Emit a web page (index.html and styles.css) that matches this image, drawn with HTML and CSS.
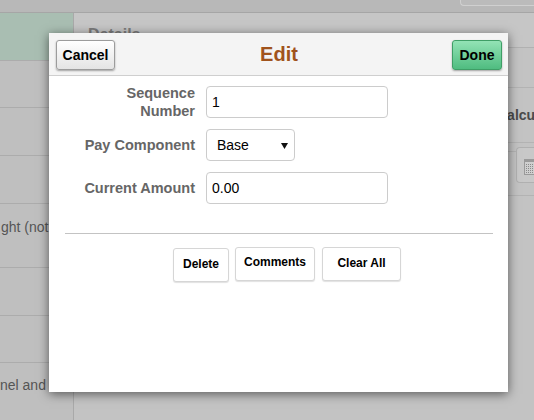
FILE: index.html
```html
<!DOCTYPE html>
<html lang="en">
<head>
<meta charset="utf-8">
<title>Edit</title>
<link rel="stylesheet" href="styles.css">
</head>
<body>
<div class="page">
  <div class="topbar"><div class="topbtn"></div></div>
  <div class="main">
    <div class="leftcol">
      <div class="lrow r48 sel"></div>
      <div class="lrow r47"></div>
      <div class="lrow r48"></div>
      <div class="lrow r48"></div>
      <div class="lrow r64"><span class="ltext t1">ght (not</span></div>
      <div class="lrow r48"></div>
      <div class="lrow r47"></div>
      <div class="lrow rest"><span class="ltext t2">nel and i</span></div>
    </div>
    <div class="content">
      <div class="dhead">Details</div>
      <div class="cblock b40"></div>
      <div class="cblock b55"><span class="calc">Calcu</span></div>
      <div class="cblock b9"></div>
      <div class="dateline">
        <div class="datebox">
          <svg class="cal" width="12" height="16" viewBox="0 0 12 16">
            <rect x="0.5" y="0.5" width="11" height="15" fill="#cfcfcf" stroke="#9a9a9a"/>
            <rect x="1" y="1" width="10" height="2" fill="#9a9a9a"/>
            <g fill="#8a8a8a">
              <rect x="2" y="5" width="1" height="1"/><rect x="4" y="5" width="1" height="1"/><rect x="6" y="5" width="1" height="1"/><rect x="8" y="5" width="1" height="1"/>
              <rect x="2" y="7" width="1" height="1"/><rect x="4" y="7" width="1" height="1"/><rect x="6" y="7" width="1" height="1"/><rect x="8" y="7" width="1" height="1"/>
              <rect x="2" y="9" width="1" height="1"/><rect x="4" y="9" width="1" height="1"/><rect x="6" y="9" width="1" height="1"/><rect x="8" y="9" width="1" height="1"/>
              <rect x="2" y="11" width="1" height="1"/><rect x="4" y="11" width="1" height="1"/><rect x="6" y="11" width="1" height="1"/><rect x="8" y="11" width="1" height="1"/>
              <rect x="2" y="13" width="1" height="1"/><rect x="4" y="13" width="1" height="1"/><rect x="6" y="13" width="1" height="1"/><rect x="8" y="13" width="1" height="1"/>
            </g>
          </svg>
        </div>
      </div>
    </div>
  </div>
</div>

<div class="modal">
  <div class="mhead">
    <div class="hl"><button class="hbtn cancel">Cancel</button></div>
    <h1 class="title">Edit</h1>
    <div class="hr-side"><button class="hbtn done">Done</button></div>
  </div>
  <div class="mbody">
    <div class="form">
      <label class="lbl two">Sequence<br>Number</label>
      <div class="field"><input class="inp" type="text" value="1"></div>
      <label class="lbl">Pay Component</label>
      <div class="field">
        <div class="select"><span>Base</span>
          <svg class="arrow" width="7" height="6" viewBox="0 0 7 6"><path d="M0 0 H7 L3.5 6 Z" fill="#111"/></svg>
        </div>
      </div>
      <label class="lbl">Current Amount</label>
      <div class="field"><input class="inp" type="text" value="0.00"></div>
    </div>
    <div class="sep"></div>
    <div class="actions">
      <button class="abtn del">Delete</button>
      <button class="abtn com">Comments</button>
      <button class="abtn clr">Clear All</button>
    </div>
  </div>
</div>
</body>
</html>
```

FILE: styles.css
```css
html, body {
  margin: 0;
  padding: 0;
}
body {
  width: 534px;
  height: 420px;
  overflow: hidden;
  position: relative;
  background: #c1c1c1;
  font-family: "Liberation Sans", Arial, sans-serif;
}

/* ---------- dimmed page behind the dialog ---------- */
.page {
  display: flex;
  flex-direction: column;
  height: 420px;
}
.topbar {
  height: 12px;
  flex: none;
  background: #b8b8b8;
  border-bottom: 1px solid #a6a6a6;
  display: flex;
  justify-content: flex-end;
}
.topbtn {
  width: 74px;
  height: 6px;
  box-sizing: border-box;
  border: 1px solid #d0d0d0;
  border-top: none;
  border-right: none;
  border-radius: 0 0 0 4px;
  background: #bbbbbb;
}
.main {
  flex: 1;
  display: flex;
}
.leftcol {
  width: 73px;
  flex: none;
  background: #bfbfbf;
  border-right: 1px solid #a9a9a9;
  display: flex;
  flex-direction: column;
  overflow: hidden;
}
.lrow {
  box-sizing: border-box;
  border-bottom: 1px solid #acacac;
  flex: none;
  white-space: nowrap;
}
.r47 { height: 47px; }
.r48 { height: 48px; }
.r64 { height: 64px; }
.rest { flex: 1; border-bottom: none; }
.sel { background: #a9beb2; }
.ltext {
  display: block;
  font-size: 14px;
  line-height: 16px;
  color: #555;
}
.t1 { padding: 15px 0 0 1px; }
.t2 { padding-top: 14px; }

.content {
  flex: 1;
  background: #c3c3c3;
  display: flex;
  flex-direction: column;
  overflow: hidden;
}
.dhead {
  height: 35px;
  box-sizing: border-box;
  padding: 13px 0 0 14px;
  font-size: 16px;
  font-weight: bold;
  color: #7c7c7c;
  border-bottom: 1px solid #b1b1b1;
  background: #c6c6c6;
}
.cblock {
  box-sizing: border-box;
  border-bottom: 1px solid #b3b3b3;
  white-space: nowrap;
  overflow: hidden;
}
.b40 { height: 40px; }
.b55 { height: 55px; }
.b9 { height: 9px; }
.calc {
  display: block;
  padding: 19px 0 0 423px;
  font-size: 14px;
  font-weight: bold;
  color: #4a4a4a;
}
.dateline {
  height: 43px;
  border-bottom: 1px solid #b3b3b3;
  display: flex;
  justify-content: flex-end;
  align-items: flex-start;
}
.datebox {
  width: 18px;
  height: 36px;
  margin-top: -5px;
  box-sizing: border-box;
  border: 1px solid #b0b0b0;
  border-right: none;
  border-radius: 4px 0 0 4px;
  background: #c8c8c8;
  padding: 11px 0 0 7px;
}
.cal { display: block; }

/* ---------- dialog ---------- */
.modal {
  position: absolute;
  left: 49px;
  top: 33px;
  width: 459px;
  height: 359px;
  background: #fff;
  box-shadow: 0 2px 10px rgba(0, 0, 0, 0.55);
  display: flex;
  flex-direction: column;
}
.mhead {
  height: 42px;
  flex: none;
  box-sizing: content-box;
  background: #f4f4f4;
  border-bottom: 1px solid #cfcfcf;
  display: grid;
  grid-template-columns: 1fr auto 1fr;
  align-items: center;
  padding: 0 6px 0 7px;
}
.hl { display: flex; justify-content: flex-start; }
.hr-side { display: flex; justify-content: flex-end; }
.title {
  margin: 0;
  font-size: 20px;
  font-weight: bold;
  color: #a0531c;
  line-height: 24px;
}
.hbtn {
  height: 30px;
  margin-top: 1px;
  font-family: "Liberation Sans", Arial, sans-serif;
  font-size: 14px;
  font-weight: bold;
  color: #000;
  border-radius: 3px;
  padding: 0;
  cursor: pointer;
}
.cancel {
  width: 59px;
  background: linear-gradient(#ffffff, #e4e4e4);
  border: 1px solid #9c9c9c;
  box-shadow: 0 1px 2px rgba(0, 0, 0, 0.35);
}
.done {
  width: 50px;
  background: linear-gradient(#93e3b5, #4fbc80);
  border: 1px solid #3f9e66;
  box-shadow: 0 1px 2px rgba(0, 0, 0, 0.35);
}

.mbody {
  flex: 1;
  display: flex;
  flex-direction: column;
}
.form {
  display: grid;
  grid-template-columns: 146px 182px;
  grid-template-rows: 32px 32px 32px;
  column-gap: 11px;
  row-gap: 11px;
  margin-top: 10px;
}
.lbl {
  justify-self: end;
  align-self: center;
  text-align: right;
  font-size: 14.5px;
  font-weight: bold;
  color: #666;
  line-height: 18px;
}
.field { height: 32px; }
.inp {
  width: 182px;
  height: 32px;
  box-sizing: border-box;
  border: 1px solid #cccccc;
  border-radius: 4px;
  padding: 0 5px;
  margin: 0;
  font-family: "Liberation Sans", Arial, sans-serif;
  font-size: 14px;
  color: #000;
  background: #fff;
}
.select {
  width: 89px;
  height: 32px;
  box-sizing: border-box;
  border: 1px solid #cccccc;
  border-radius: 4px;
  background: #fff;
  display: flex;
  align-items: center;
  justify-content: space-between;
  padding: 0 6px 0 10px;
  font-size: 14px;
  color: #000;
}
.arrow { display: block; margin-top: 1px; }

.sep {
  height: 1px;
  background: #c3c3c3;
  margin: 29px 15px 0 16px;
}
.actions {
  display: flex;
  align-items: flex-start;
  padding-left: 124px;
  margin-top: 13px;
}
.abtn {
  height: 34px;
  box-sizing: border-box;
  background: #fff;
  border: 1px solid #d6d6d6;
  border-radius: 3px;
  box-shadow: 0 1px 1px rgba(0, 0, 0, 0.12);
  font-family: "Liberation Sans", Arial, sans-serif;
  font-size: 12px;
  font-weight: bold;
  color: #000;
  padding: 0 0 2px;
  cursor: pointer;
}
.del { width: 56px; margin-top: 1px; margin-right: 6px; }
.com { width: 80px; margin-right: 7px; padding-bottom: 5px; }
.clr { width: 79px; }
```
